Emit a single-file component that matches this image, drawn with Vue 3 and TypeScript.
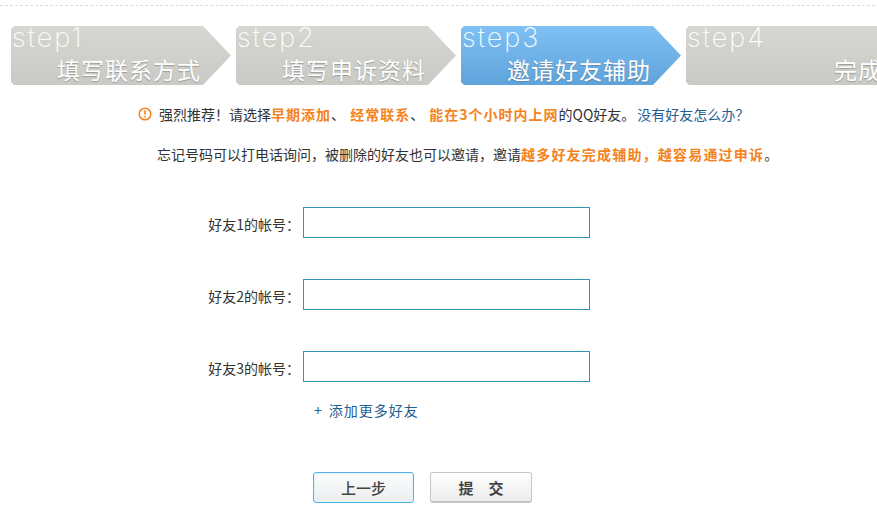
<script setup lang="ts">
interface Step { no: string; label: string; active?: boolean; last?: boolean }
const steps: Step[] = [
  { no: 'step1', label: '填写联系方式' },
  { no: 'step2', label: '填写申诉资料' },
  { no: 'step3', label: '邀请好友辅助', active: true },
  { no: 'step4', label: '完成', last: true },
]
const friends = [1, 2, 3]
</script>

<template>
  <div class="page">
    <div class="steps">
      <div v-for="s in steps" :key="s.no" class="step" :class="{ active: s.active, last: s.last }">
        <div class="no">{{ s.no }}</div>
        <div class="label">{{ s.label }}</div>
      </div>
    </div>

    <p class="tip">
      <svg class="warn" width="14" height="14" viewBox="0 0 14 14">
        <circle cx="7" cy="7" r="5.8" fill="none" stroke="#f58220" stroke-width="1.5" />
        <rect x="6.2" y="3.4" width="1.6" height="4.4" fill="#f58220" />
        <rect x="6.2" y="9" width="1.6" height="1.6" fill="#f58220" />
      </svg>
      <span>强烈推荐！请选择<b>早期添加</b>、 <b class="gap">经常联系</b>、 <b class="gap">能在3个小时内上网</b>的QQ好友。</span>
      <a class="link">没有好友怎么办？</a>
    </p>
    <p class="note">忘记号码可以打电话询问，被删除的好友也可以邀请，邀请<b>越多好友完成辅助，越容易通过申诉</b>。</p>

    <div class="form">
      <div v-for="n in friends" :key="n" class="row">
        <label class="name">好友{{ n }}的帐号：</label>
        <input class="field" type="text" />
      </div>
    </div>

    <a class="more"><span class="plus">+</span>添加更多好友</a>

    <div class="actions">
      <button class="btn prev">上一步</button>
      <button class="btn submit">提　交</button>
    </div>
  </div>
</template>

<style>
html, body { margin: 0; background: #fff; }
</style>

<style scoped>
.page {
  width: 877px;
  height: 506px;
  overflow: hidden;
  box-sizing: border-box;
  padding-top: 5px;
  font-family: "Noto Sans CJK SC", "Liberation Sans", sans-serif;
  font-size: 14px;
  color: #333;
  background: #fff;
}
.steps {
  display: flex;
  gap: 5px;
  width: 920px;
  padding: 20px 0 0 11px;
  border-top: 1px dashed #dcdcdc;
  box-sizing: border-box;
}
.step {
  flex: 0 0 220px;
  height: 59px;
  color: #fff;
  background: linear-gradient(#d6d6d2, #c9c9c5);
  clip-path: polygon(3px 0, 192px 0, 220px 29.5px, 192px 59px, 3px 59px, 0 56px, 0 3px);
}
.step.active { background: linear-gradient(#7fc1f3, #5fa3dc); }
.no {
  padding-left: 1px;
  font-family: Inter, sans-serif;
  font-weight: 200;
  font-size: 27px;
  line-height: 23px;
  letter-spacing: 2px;
  opacity: 0.92;
}
.label {
  margin-top: 6px;
  padding-left: 46px;
  font-size: 23px;
  font-weight: 400;
  line-height: 28px;
  letter-spacing: 1px;
  white-space: nowrap;
  text-shadow: 0 1px 1px rgba(90, 90, 90, 0.45);
}
.step.last .label { padding-left: 148px; }
.tip, .note { margin: 0; line-height: 20px; white-space: nowrap; }
.tip {
  display: flex;
  align-items: center;
  margin: 19px 0 0 138px;
}
.warn { margin-right: 7px; }
.note { margin: 20px 0 0 157px; }
b { color: #f58220; font-weight: 700; letter-spacing: 1px; }
.note b { letter-spacing: 1.2px; }
.gap { margin-left: 2px; }
.link { margin-left: 2px; color: #1f6094; }
.form { margin-top: 43px; }
.row {
  display: flex;
  align-items: center;
  height: 31px;
  margin-bottom: 41px;
}
.name { width: 300px; padding-top: 2px; text-align: right; }
.field {
  width: 287px;
  height: 31px;
  margin: 0 0 0 3px;
  padding: 0;
  box-sizing: border-box;
  border: 1px solid #2f96b4;
  background: #fff;
}
.more {
  display: block;
  margin: -23px 0 0 314px;
  color: #1f6094;
  line-height: 20px;
  letter-spacing: 1px;
}
.plus { margin-right: 6px; }
.actions { display: flex; gap: 16px; margin: 52px 0 0 313px; }
.btn {
  width: 101px;
  height: 31px;
  padding: 0;
  font: 700 15px "Noto Sans CJK SC", sans-serif;
  color: #444;
  border-radius: 3px;
  background: linear-gradient(#fcfcfc, #ebedef);
}
.prev { border: 1px solid #55b0e8; font-weight: 500; box-shadow: inset 0 0 0 1px #e3f2fb; }
.submit { width: 102px; border: 1px solid #c6c6c6; border-bottom-width: 2px; background: linear-gradient(#fff, #ececec); }
</style>
